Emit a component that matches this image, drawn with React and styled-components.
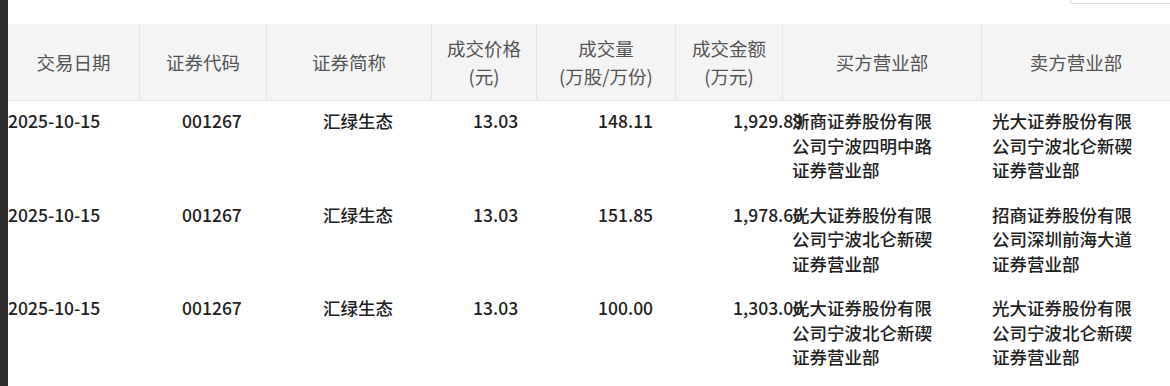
import React from "react";
import styled, { createGlobalStyle } from "styled-components";

const Global = createGlobalStyle`
  html, body { margin: 0; padding: 0; background: #fff; }
  body { font-family: "Noto Sans CJK SC", "Noto Sans", sans-serif; }
  * { box-sizing: border-box; }
`;

const Page = styled.div`
  display: flex;
  width: 1170px;
  height: 386px;
  overflow: hidden;
`;

const Strip = styled.div`
  width: 8px;
  flex: none;
  background: #2d2d2d;
`;

const Main = styled.div`
  flex: 1;
  display: flex;
  flex-direction: column;
  min-width: 0;
`;

const TopBar = styled.div`
  height: 24px;
  display: flex;
  justify-content: flex-end;
  align-items: flex-start;
`;

const PickerEdge = styled.div`
  width: 100px;
  height: 4px;
  border: 1px solid #dedede;
  border-top: none;
  border-right: none;
  border-bottom-left-radius: 3px;
  background: #fff;
`;

const HeadRow = styled.div`
  display: grid;
  grid-template-columns: 132px 127px 165px 105px 139px 107px 199px 1fr;
  height: 77px;
  background: #f4f4f4;
  border-bottom: 1px solid #e8e8e8;
`;

const HeadCell = styled.div`
  display: flex;
  flex-direction: column;
  align-items: center;
  justify-content: center;
  border-right: ${(p) => (p.$last ? "none" : "1px solid #e6e6e6")};
  color: #555;
  font-size: 18.5px;
  line-height: 28px;
  text-align: center;
  white-space: nowrap;
`;

const BodyRow = styled.div`
  display: grid;
  grid-template-columns: 174px 141px 150px 125px 135px 59px 200px 1fr;
  padding: 8px 0 12px;
  color: #222;
  font-size: 17.5px;
  line-height: 24.5px;
  font-weight: 500;
`;

const Cell = styled.div`
  white-space: nowrap;
  overflow: visible;
`;

const DeptCell = styled.div`
  max-width: 148px;
  white-space: normal;
  word-break: break-all;
`;

const headers = [
  ["交易日期"],
  ["证券代码"],
  ["证券简称"],
  ["成交价格", "(元)"],
  ["成交量", "(万股/万份)"],
  ["成交金额", "(万元)"],
  ["买方营业部"],
  ["卖方营业部"],
];

const rows = [
  {
    date: "2025-10-15",
    code: "001267",
    name: "汇绿生态",
    price: "13.03",
    vol: "148.11",
    amt: "1,929.89",
    buy: "浙商证券股份有限公司宁波四明中路证券营业部",
    sell: "光大证券股份有限公司宁波北仑新碶证券营业部",
  },
  {
    date: "2025-10-15",
    code: "001267",
    name: "汇绿生态",
    price: "13.03",
    vol: "151.85",
    amt: "1,978.60",
    buy: "光大证券股份有限公司宁波北仑新碶证券营业部",
    sell: "招商证券股份有限公司深圳前海大道证券营业部",
  },
  {
    date: "2025-10-15",
    code: "001267",
    name: "汇绿生态",
    price: "13.03",
    vol: "100.00",
    amt: "1,303.00",
    buy: "光大证券股份有限公司宁波北仑新碶证券营业部",
    sell: "光大证券股份有限公司宁波北仑新碶证券营业部",
  },
];

export default function App() {
  return (
    <>
      <Global />
      <Page>
        <Strip />
        <Main>
          <TopBar>
            <PickerEdge />
          </TopBar>
          <HeadRow>
            {headers.map((h, i) => (
              <HeadCell key={i} $last={i === headers.length - 1}>
                {h.map((line) => (
                  <span key={line}>{line}</span>
                ))}
              </HeadCell>
            ))}
          </HeadRow>
          {rows.map((r, i) => (
            <BodyRow key={i}>
              <Cell>{r.date}</Cell>
              <Cell>{r.code}</Cell>
              <Cell>{r.name}</Cell>
              <Cell>{r.price}</Cell>
              <Cell>{r.vol}</Cell>
              <Cell>{r.amt}</Cell>
              <DeptCell>{r.buy}</DeptCell>
              <DeptCell>{r.sell}</DeptCell>
            </BodyRow>
          ))}
        </Main>
      </Page>
    </>
  );
}
